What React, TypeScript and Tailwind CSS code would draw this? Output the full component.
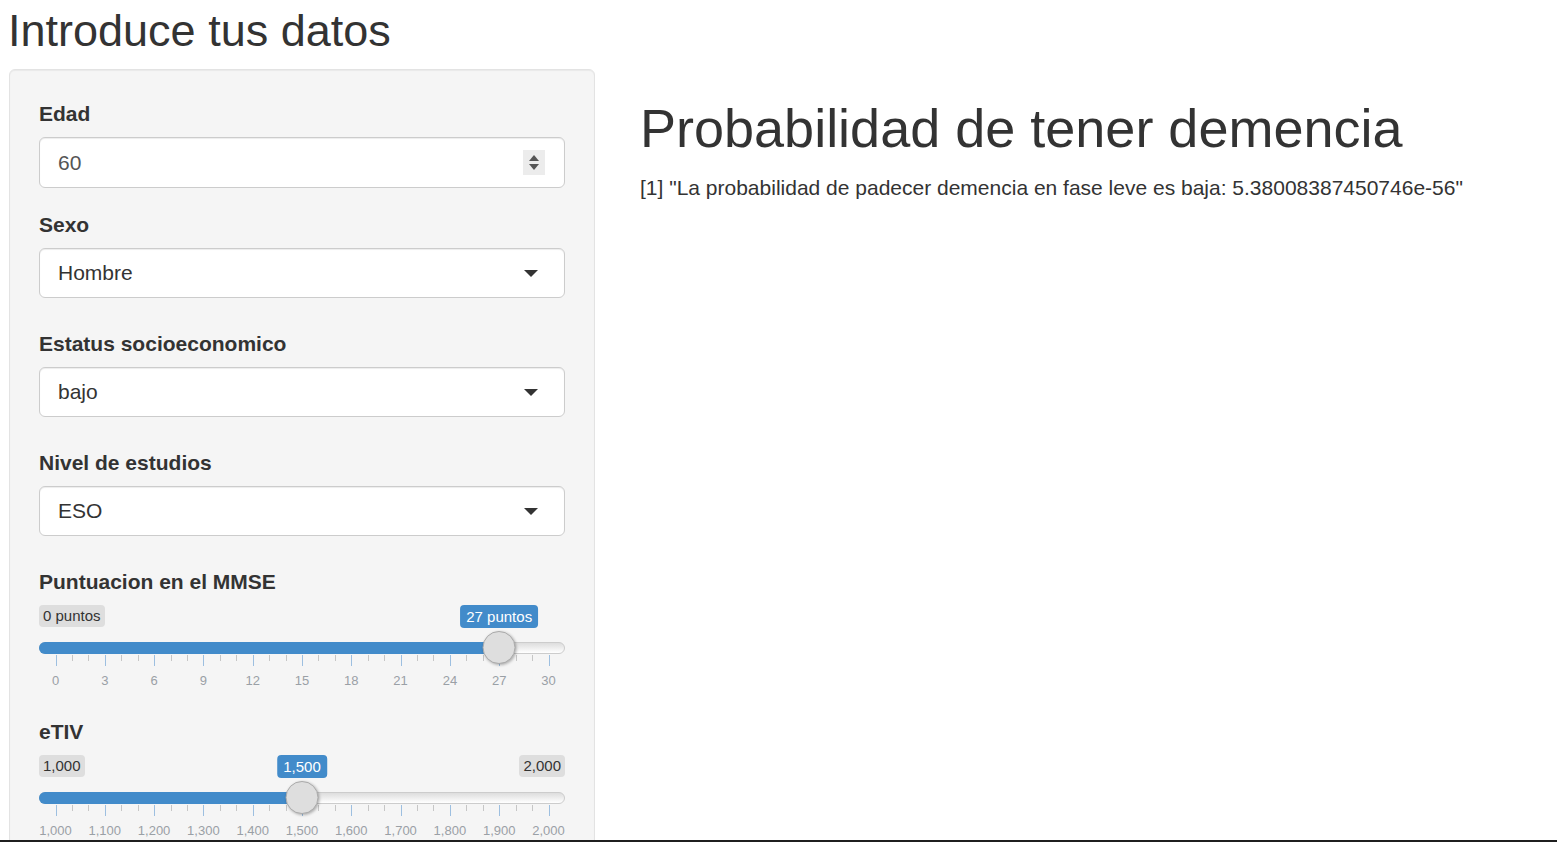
import React from 'react';

interface SliderProps {
  min: number;
  max: number;
  value: number;
  fmt: (n: number) => string;
  grid: string[];
  showMax: boolean;
}

function Slider({ min, max, value, fmt, grid, showMax }: SliderProps) {
  const pct = ((value - min) / (max - min)) * 100;
  const ticks = Array.from({ length: 31 }, (_, i) => i);

  return (
    <div className="relative h-[90px]">
      {/* line */}
      <div className="absolute left-0 right-0 top-[37px] h-[12px] rounded-[16px] border border-[#cccccc] bg-gradient-to-b from-[#dddddd] to-white" />
      {/* bar */}
      <div
        className="absolute left-0 top-[37px] h-[12px] rounded-l-[16px] bg-[#428bca]"
        style={{ width: `calc(16.5px + ${pct / 100} * (100% - 33px))` }}
      />
      {/* min / max */}
      <span className="absolute left-0 top-0 h-[22px] rounded-[4px] bg-[#dedede] px-[4px] text-[15px] leading-[22px] text-[#333]">
        {fmt(min)}
      </span>
      {showMax && (
        <span className="absolute right-0 top-0 h-[22px] rounded-[4px] bg-[#dedede] px-[4px] text-[15px] leading-[22px] text-[#333]">
          {fmt(max)}
        </span>
      )}

      <div className="absolute inset-y-0 left-[16.5px] right-[16.5px]">
        {ticks.map((i) => {
          const major = i % 3 === 0;
          return (
            <div
              key={i}
              className={
                major
                  ? 'absolute top-[50px] h-[11px] w-px bg-[#9dbfe0]'
                  : 'absolute top-[50px] h-[6px] w-px bg-[#c6c6c6]'
              }
              style={{ left: `${(i / 30) * 100}%` }}
            />
          );
        })}
        {grid.map((g, i) => (
          <span
            key={g}
            className="absolute top-[69px] -translate-x-1/2 whitespace-nowrap text-[13px] leading-[14px] text-[#9aa0a6]"
            style={{ left: `${(i / (grid.length - 1)) * 100}%` }}
          >
            {g}
          </span>
        ))}

        {/* single value */}
        <span
          className="absolute top-0 h-[23px] -translate-x-1/2 whitespace-nowrap rounded-[4px] bg-[#428bca] px-[6px] text-[15px] leading-[23px] text-white"
          style={{ left: `${pct}%` }}
        >
          {fmt(value)}
        </span>

        {/* handle */}
        <div
          className="absolute top-[26px] h-[33px] w-[33px] -translate-x-1/2 rounded-full border border-[#ababab] bg-[#dedede] shadow-[1px_1px_3px_rgba(0,0,0,0.3)]"
          style={{ left: `${pct}%` }}
        />
      </div>
    </div>
  );
}

function Caret() {
  return (
    <span className="h-0 w-0 border-x-[7.5px] border-t-[7.5px] border-x-transparent border-t-[#333]" />
  );
}

function SelectBox({ value }: { value: string }) {
  return (
    <div className="flex h-[50px] items-center justify-between rounded-[6px] border border-[#cccccc] bg-white pl-[18px] pr-[26px] text-[21px] text-[#333] shadow-[inset_0_1px_1px_rgba(0,0,0,0.075)]">
      <span>{value}</span>
      <Caret />
    </div>
  );
}

export default function App() {
  const thousands = (n: number) => n.toLocaleString('en-US');
  const mmseGrid = ['0', '3', '6', '9', '12', '15', '18', '21', '24', '27', '30'];
  const etivGrid = Array.from({ length: 11 }, (_, i) => thousands(1000 + i * 100));

  return (
    <div className="min-h-screen bg-white font-['Liberation_Sans',Arial,sans-serif] text-[#333]">
      <h2 className="pl-[8px] pt-[6px] text-[45px] leading-[50px] font-normal">Introduce tus datos</h2>

      <div className="mt-[13px] flex items-start">
        {/* Sidebar */}
        <div className="ml-[9px] w-[586px] shrink-0 rounded-[6px] border border-[#e3e3e3] bg-[#f5f5f5] px-[29px] pt-[29px] pb-[28px] shadow-[inset_0_1px_1px_rgba(0,0,0,0.05)]">
          {/* Edad */}
          <div className="mb-[22px]">
            <label className="mb-[8px] block text-[21px] leading-[30px] font-bold">Edad</label>
            <div className="flex h-[51px] items-center justify-between rounded-[6px] border border-[#cccccc] bg-white pl-[18px] pr-[19px] text-[21px] text-[#555] shadow-[inset_0_1px_1px_rgba(0,0,0,0.075)]">
              <span>60</span>
              <div className="flex h-[25px] w-[22px] flex-col items-center justify-center gap-[3px] bg-[#ececec]">
                <span className="h-0 w-0 border-x-[5px] border-b-[6px] border-x-transparent border-b-[#555]" />
                <span className="h-0 w-0 border-x-[5px] border-t-[6px] border-x-transparent border-t-[#555]" />
              </div>
            </div>
          </div>

          {/* Sexo */}
          <div className="mb-[31px]">
            <label className="mb-[8px] block text-[21px] leading-[30px] font-bold">Sexo</label>
            <SelectBox value="Hombre" />
          </div>

          {/* Estatus */}
          <div className="mb-[31px]">
            <label className="mb-[8px] block text-[21px] leading-[30px] font-bold">Estatus socioeconomico</label>
            <SelectBox value="bajo" />
          </div>

          {/* Nivel */}
          <div className="mb-[31px]">
            <label className="mb-[8px] block text-[21px] leading-[30px] font-bold">Nivel de estudios</label>
            <SelectBox value="ESO" />
          </div>

          {/* MMSE */}
          <div className="mb-[22px]">
            <label className="mb-[8px] block text-[21px] leading-[30px] font-bold">Puntuacion en el MMSE</label>
            <Slider min={0} max={30} value={27} fmt={(n) => `${n} puntos`} grid={mmseGrid} showMax={false} />
          </div>

          {/* eTIV */}
          <div>
            <label className="mb-[8px] block text-[21px] leading-[30px] font-bold">eTIV</label>
            <Slider min={1000} max={2000} value={1500} fmt={thousands} grid={etivGrid} showMax={true} />
          </div>
        </div>

        {/* Main */}
        <div className="pl-[45px]">
          <h1 className="mt-[30px] mb-[15px] text-[54px] leading-[59px] font-normal">
            Probabilidad de tener demencia
          </h1>
          <div className="text-[21px] leading-[30px]">
            [1] "La probabilidad de padecer demencia en fase leve es baja: 5.38008387450746e-56"
          </div>
        </div>
      </div>

      <div className="fixed bottom-0 left-0 right-0 h-[2px] bg-[#1f1f1f]" />
    </div>
  );
}
